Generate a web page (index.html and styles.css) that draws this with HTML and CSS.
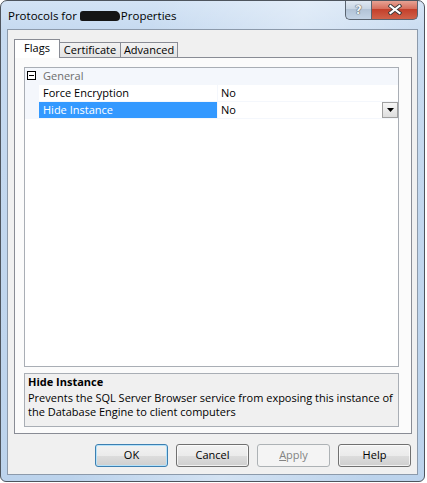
FILE: index.html
```html
<!DOCTYPE html>
<html>
<head>
<meta charset="utf-8">
<link rel="stylesheet" href="styles.css">
</head>
<body>
<div class="window">
  <div class="titlebar">
    <div class="title">Protocols for <span class="redact"></span>Properties</div>
    <div class="caption-btns">
      <div class="cbtn help-btn">?</div>
      <div class="cbtn close-btn">
        <svg width="14" height="11" viewBox="0 0 14 11"><path d="M2.5 2 L11.5 9 M11.5 2 L2.5 9" stroke="#3a3a3a" stroke-width="4" stroke-linecap="square"/><path d="M2.5 2 L11.5 9 M11.5 2 L2.5 9" stroke="#ffffff" stroke-width="2.2" stroke-linecap="square"/></svg>
      </div>
    </div>
  </div>
  <div class="client">
    <div class="tabs">
      <div class="tab tab-flags active">Flags</div>
      <div class="tab tab-cert">Certificate</div>
      <div class="tab tab-adv">Advanced</div>
    </div>
    <div class="panel">
      <div class="grid">
        <div class="row cat">
          <div class="margin"><span class="minus"></span></div>
          <div class="catname">General</div>
        </div>
        <div class="row">
          <div class="margin"></div>
          <div class="name">Force Encryption</div>
          <div class="value">No</div>
        </div>
        <div class="row selected">
          <div class="margin"></div>
          <div class="name">Hide Instance</div>
          <div class="value">No<span class="dd"><svg width="7" height="4" viewBox="0 0 7 4"><path d="M0 0 H7 L3.5 4 Z" fill="#000"/></svg></span></div>
        </div>
      </div>
      <div class="desc">
        <div class="desc-title">Hide Instance</div>
        <div class="desc-text">Prevents the SQL Server Browser service from exposing this instance of the Database Engine to client computers</div>
      </div>
    </div>
    <div class="buttons">
      <div class="btn default">OK</div>
      <div class="btn">Cancel</div>
      <div class="btn disabled"><u>A</u>pply</div>
      <div class="btn">Help</div>
    </div>
  </div>
</div>
</body>
</html>
```

FILE: styles.css
```css
html, body {
  margin: 0;
  padding: 0;
  background: #ffffff;
}
body {
  font-family: "Open Sans", "Noto Sans", sans-serif;
  font-size: 11px;
  color: #000;
}
.window {
  box-sizing: border-box;
  width: 425px;
  height: 482px;
  border: 1px solid #4e555e;
  border-radius: 7px 7px 6px 6px;
  background:
    linear-gradient(100deg, rgba(255,255,255,0) 30%, rgba(255,255,255,0.35) 60%, rgba(255,255,255,0) 90%),
    linear-gradient(to bottom, #d3e3f5 0, #c6daf0 30px, #bcd3ec 100%);
  display: flex;
  flex-direction: column;
  overflow: hidden;
}
.titlebar {
  height: 28px;
  display: flex;
  justify-content: space-between;
  align-items: flex-start;
  padding: 0 6px 0 7px;
}
.title {
  margin-top: 7px;
  font-size: 11.5px;
  line-height: 16px;
  display: flex;
  align-items: center;
}
.redact {
  display: inline-block;
  width: 40px;
  height: 10px;
  margin: 0 1px 0 3px;
  background: #151515;
  border-radius: 3px 5px 4px 2px;
  filter: blur(0.6px);
}
.caption-btns {
  display: flex;
  margin-top: -1px;
}
.cbtn {
  height: 20px;
  box-sizing: border-box;
  border: 1px solid #5a6470;
  border-top: none;
  display: flex;
  align-items: center;
  justify-content: center;
}
.help-btn {
  width: 26px;
  border-right: none;
  border-radius: 0 0 0 5px;
  background: linear-gradient(to bottom, #e3ebf4 0, #c9d6e4 45%, #b2c3d6 50%, #c4d4e6 100%);
  color: #eef2f6;
  font-family: "DejaVu Sans", sans-serif;
  font-size: 12px;
  font-weight: bold;
  text-shadow: 0 0 1px #444, 0 0 1px #444;
}
.close-btn {
  width: 47px;
  border-radius: 0 0 5px 0;
  background: linear-gradient(to bottom, #e9a99b 0, #d7705e 45%, #c4402b 50%, #d0624a 100%);
}
.client {
  flex: 1;
  margin: 0 6px 6px 6px;
  border: 1px solid #8c9aab;
  background: #f0f0f0;
  padding: 9px 5px 0 6px;
  display: flex;
  flex-direction: column;
}
.tabs {
  display: flex;
  align-items: flex-end;
  height: 18px;
  position: relative;
  z-index: 1;
}
.tab {
  box-sizing: border-box;
  height: 15px;
  border: 1px solid #898c95;
  border-bottom: none;
  background: linear-gradient(to bottom, #f2f2f2, #e3e3e3);
  line-height: 13px;
  text-align: center;
  margin-left: -1px;
}
.tab.active {
  height: 19px;
  margin-bottom: -1px;
  background: #ffffff;
  line-height: 16px;
  margin-left: 0;
  position: relative;
  z-index: 2;
}
.tab-flags { width: 46px; }
.tab-cert { width: 62px; }
.tab-adv { width: 58px; }
.panel {
  box-sizing: border-box;
  height: 377px;
  border: 1px solid #898c95;
  background: #fbfbfb;
  padding: 9px 12px 6px 9px;
  display: flex;
  flex-direction: column;
  gap: 6px;
}
.grid {
  box-sizing: border-box;
  height: 300px;
  border: 1px solid #a9aeb5;
  background: #ffffff;
}
.row {
  display: flex;
  height: 17px;
  box-sizing: border-box;
  border-bottom: 1px solid #f4f7fc;
}
.margin {
  width: 14px;
  flex: none;
  background: #f4f7fc;
  position: relative;
}
.cat {
  background: #f4f7fc;
}
.minus {
  position: absolute;
  left: 2px;
  top: 3px;
  width: 9px;
  height: 9px;
  box-sizing: border-box;
  border: 1px solid #000;
  background: #fff;
}
.minus::after {
  content: "";
  position: absolute;
  left: 1px;
  top: 3px;
  width: 5px;
  height: 1px;
  background: #000;
}
.catname {
  padding-left: 4px;
  line-height: 16px;
  color: #6d6d6d;
}
.name {
  width: 179px;
  flex: none;
  box-sizing: border-box;
  padding-left: 4px;
  line-height: 16px;
  border-right: 1px solid #f4f7fc;
}
.value {
  flex: 1;
  padding-left: 3px;
  line-height: 16px;
  display: flex;
  justify-content: space-between;
}
.selected .name {
  background: #3399ff;
  color: #ffffff;
}
.dd {
  width: 16px;
  height: 16px;
  box-sizing: border-box;
  border: 1px solid #a0a0a0;
  background: linear-gradient(to bottom, #f6f6f6, #dedede);
  display: flex;
  align-items: center;
  justify-content: center;
}
.desc {
  box-sizing: border-box;
  height: 54px;
  border: 1px solid #a9aeb5;
  background: #f0f0f0;
  padding: 1px 3px;
  line-height: 14px;
}
.desc-title {
  font-weight: bold;
  margin-bottom: 2px;
}
.buttons {
  display: flex;
  justify-content: flex-end;
  gap: 8px;
  margin-top: 10px;
  padding-right: 1px;
}
.btn {
  box-sizing: border-box;
  width: 73px;
  height: 23px;
  border: 1px solid #707070;
  border-radius: 3px;
  background: linear-gradient(to bottom, #f2f2f2 0, #ebebeb 50%, #dddddd 50%, #cfcfcf 100%);
  box-shadow: inset 0 0 0 1px rgba(255,255,255,0.7);
  text-align: center;
  line-height: 20px;
}
.btn.default {
  border-color: #3c7fb1;
  box-shadow: inset 0 0 0 1px #b5e2fa;
}
.btn.disabled {
  border-color: #adb2b5;
  background: #f4f4f4;
  color: #838383;
  box-shadow: none;
}
```
